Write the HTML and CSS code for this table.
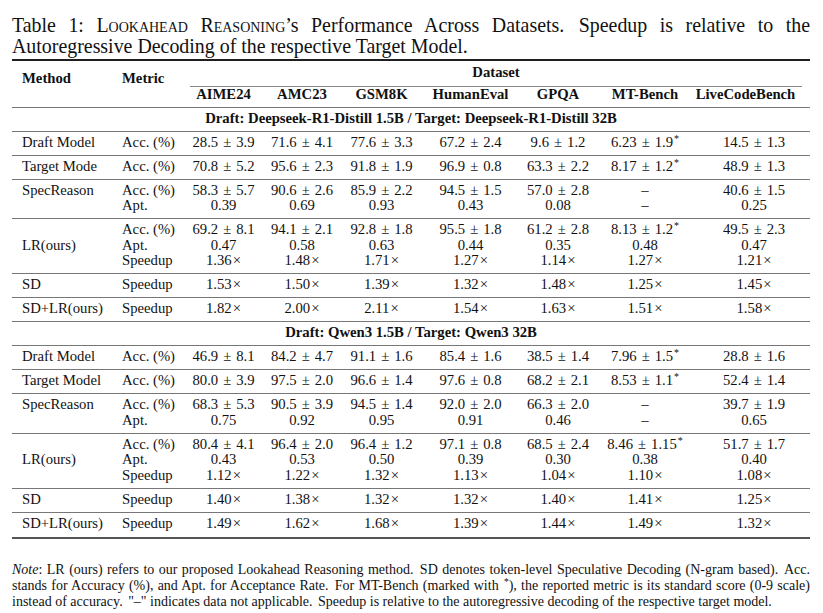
FILE: index.html
```html
<!DOCTYPE html>
<html lang="en">
<head>
<meta charset="utf-8">
<title>Table 1</title>
<link rel="stylesheet" href="styles.css">
</head>
<body>
<div class="page">
  <div class="caption">
    <div class="jline">Table 1: <span class="sc">Lookahead Reasoning</span>’s Performance Across Datasets.<span class="ss"></span> Speedup is relative to the</div>
    <div class="line">Autoregressive Decoding of the respective Target Model.</div>
  </div>

  <table class="results">
    <colgroup>
      <col class="c-method"><col class="c-metric"><col class="c-aime"><col class="c-amc"><col class="c-gsm"><col class="c-he"><col class="c-gpqa"><col class="c-mt"><col class="c-lcb">
    </colgroup>
    <thead>
      <tr class="h1">
        <th class="hm" rowspan="2">Method</th>
        <th class="hm" rowspan="2">Metric</th>
        <th class="dataset" colspan="7"><div class="dataset-label">Dataset</div></th>
      </tr>
      <tr class="h2">
        <th>AIME24</th><th>AMC23</th><th>GSM8K</th><th>HumanEval</th><th>GPQA</th><th>MT-Bench</th><th class="lcb">LiveCodeBench</th>
      </tr>
    </thead>
    <tbody>
      <tr class="sec"><th colspan="9">Draft: Deepseek-R1-Distill 1.5B / Target: Deepseek-R1-Distill 32B</th></tr>
      <tr>
        <td class="m">Draft Model</td><td class="k">Acc. (%)</td>
        <td>28.5<span class="pm">±</span>3.9</td><td>71.6<span class="pm">±</span>4.1</td><td>77.6<span class="pm">±</span>3.3</td><td>67.2<span class="pm">±</span>2.4</td><td>9.6<span class="pm">±</span>1.2</td><td>6.23<span class="pm">±</span>1.9<sup class="ast">*</sup></td><td class="l">14.5<span class="pm">±</span>1.3</td>
      </tr>
      <tr>
        <td class="m">Target Mode</td><td class="k">Acc. (%)</td>
        <td>70.8<span class="pm">±</span>5.2</td><td>95.6<span class="pm">±</span>2.3</td><td>91.8<span class="pm">±</span>1.9</td><td>96.9<span class="pm">±</span>0.8</td><td>63.3<span class="pm">±</span>2.2</td><td>8.17<span class="pm">±</span>1.2<sup class="ast">*</sup></td><td class="l">48.9<span class="pm">±</span>1.3</td>
      </tr>
      <tr>
        <td class="m">SpecReason</td><td class="k">Acc. (%)<br>Apt.</td>
        <td>58.3<span class="pm">±</span>5.7<br>0.39</td><td>90.6<span class="pm">±</span>2.6<br>0.69</td><td>85.9<span class="pm">±</span>2.2<br>0.93</td><td>94.5<span class="pm">±</span>1.5<br>0.43</td><td>57.0<span class="pm">±</span>2.8<br>0.08</td><td>–<br>–</td><td class="l">40.6<span class="pm">±</span>1.5<br>0.25</td>
      </tr>
      <tr>
        <td class="m mid">LR(ours)</td><td class="k">Acc. (%)<br>Apt.<br>Speedup</td>
        <td>69.2<span class="pm">±</span>8.1<br>0.47<br>1.36<span class="x">×</span></td>
        <td>94.1<span class="pm">±</span>2.1<br>0.58<br>1.48<span class="x">×</span></td>
        <td>92.8<span class="pm">±</span>1.8<br>0.63<br>1.71<span class="x">×</span></td>
        <td>95.5<span class="pm">±</span>1.8<br>0.44<br>1.27<span class="x">×</span></td>
        <td>61.2<span class="pm">±</span>2.8<br>0.35<br>1.14<span class="x">×</span></td>
        <td>8.13<span class="pm">±</span>1.2<sup class="ast">*</sup><br>0.48<br>1.27<span class="x">×</span></td>
        <td class="l">49.5<span class="pm">±</span>2.3<br>0.47<br>1.21<span class="x">×</span></td>
      </tr>
      <tr>
        <td class="m">SD</td><td class="k">Speedup</td>
        <td>1.53<span class="x">×</span></td><td>1.50<span class="x">×</span></td><td>1.39<span class="x">×</span></td><td>1.32<span class="x">×</span></td><td>1.48<span class="x">×</span></td><td>1.25<span class="x">×</span></td><td class="l">1.45<span class="x">×</span></td>
      </tr>
      <tr>
        <td class="m">SD+LR(ours)</td><td class="k">Speedup</td>
        <td>1.82<span class="x">×</span></td><td>2.00<span class="x">×</span></td><td>2.11<span class="x">×</span></td><td>1.54<span class="x">×</span></td><td>1.63<span class="x">×</span></td><td>1.51<span class="x">×</span></td><td class="l">1.58<span class="x">×</span></td>
      </tr>

      <tr class="sec"><th colspan="9">Draft: Qwen3 1.5B / Target: Qwen3 32B</th></tr>
      <tr>
        <td class="m">Draft Model</td><td class="k">Acc. (%)</td>
        <td>46.9<span class="pm">±</span>8.1</td><td>84.2<span class="pm">±</span>4.7</td><td>91.1<span class="pm">±</span>1.6</td><td>85.4<span class="pm">±</span>1.6</td><td>38.5<span class="pm">±</span>1.4</td><td>7.96<span class="pm">±</span>1.5<sup class="ast">*</sup></td><td class="l">28.8<span class="pm">±</span>1.6</td>
      </tr>
      <tr>
        <td class="m">Target Model</td><td class="k">Acc. (%)</td>
        <td>80.0<span class="pm">±</span>3.9</td><td>97.5<span class="pm">±</span>2.0</td><td>96.6<span class="pm">±</span>1.4</td><td>97.6<span class="pm">±</span>0.8</td><td>68.2<span class="pm">±</span>2.1</td><td>8.53<span class="pm">±</span>1.1<sup class="ast">*</sup></td><td class="l">52.4<span class="pm">±</span>1.4</td>
      </tr>
      <tr>
        <td class="m">SpecReason</td><td class="k">Acc. (%)<br>Apt.</td>
        <td>68.3<span class="pm">±</span>5.3<br>0.75</td><td>90.5<span class="pm">±</span>3.9<br>0.92</td><td>94.5<span class="pm">±</span>1.4<br>0.95</td><td>92.0<span class="pm">±</span>2.0<br>0.91</td><td>66.3<span class="pm">±</span>2.0<br>0.46</td><td>–<br>–</td><td class="l">39.7<span class="pm">±</span>1.9<br>0.65</td>
      </tr>
      <tr>
        <td class="m mid">LR(ours)</td><td class="k">Acc. (%)<br>Apt.<br>Speedup</td>
        <td>80.4<span class="pm">±</span>4.1<br>0.43<br>1.12<span class="x">×</span></td>
        <td>96.4<span class="pm">±</span>2.0<br>0.53<br>1.22<span class="x">×</span></td>
        <td>96.4<span class="pm">±</span>1.2<br>0.50<br>1.32<span class="x">×</span></td>
        <td>97.1<span class="pm">±</span>0.8<br>0.39<br>1.13<span class="x">×</span></td>
        <td>68.5<span class="pm">±</span>2.4<br>0.30<br>1.04<span class="x">×</span></td>
        <td>8.46<span class="pm">±</span>1.15<sup class="ast">*</sup><br>0.38<br>1.10<span class="x">×</span></td>
        <td class="l">51.7<span class="pm">±</span>1.7<br>0.40<br>1.08<span class="x">×</span></td>
      </tr>
      <tr>
        <td class="m">SD</td><td class="k">Speedup</td>
        <td>1.40<span class="x">×</span></td><td>1.38<span class="x">×</span></td><td>1.32<span class="x">×</span></td><td>1.32<span class="x">×</span></td><td>1.40<span class="x">×</span></td><td>1.41<span class="x">×</span></td><td class="l">1.25<span class="x">×</span></td>
      </tr>
      <tr class="last">
        <td class="m">SD+LR(ours)</td><td class="k">Speedup</td>
        <td>1.49<span class="x">×</span></td><td>1.62<span class="x">×</span></td><td>1.68<span class="x">×</span></td><td>1.39<span class="x">×</span></td><td>1.44<span class="x">×</span></td><td>1.49<span class="x">×</span></td><td class="l">1.32<span class="x">×</span></td>
      </tr>
    </tbody>
  </table>

  <div class="note">
    <div class="jline"><em>Note</em>: LR (ours) refers to our proposed Lookahead Reasoning method.<span class="ss"></span> SD denotes token-level Speculative Decoding (N-gram based).<span class="ss"></span> Acc.</div>
    <div class="jline">stands for Accuracy (%), and Apt. for Acceptance Rate.<span class="ss"></span> For MT-Bench (marked with <sup class="ast">*</sup>), the reported metric is its standard score (0-9 scale)</div>
    <div class="line">instead of accuracy.<span class="ss"></span> "–" indicates data not applicable.<span class="ss"></span> Speedup is relative to the autoregressive decoding of the respective target model.</div>
  </div>
</div>
</body>
</html>
```

FILE: styles.css
```css
* { box-sizing: border-box; }

html, body {
  margin: 0;
  padding: 0;
  background: #ffffff;
}

body {
  font-family: "Liberation Serif", "Times New Roman", serif;
  color: #111111;
}

.page {
  width: 823px;
  padding: 15px 13px 0 12px;
}

/* caption */
.caption {
  font-size: 19.9px;
  line-height: 20.5px;
  margin-bottom: 3px;
}

.jline {
  text-align: justify;
  text-align-last: justify;
}

.line {
  white-space: nowrap;
}

.sc {
  font-variant: small-caps;
}

.ss {
  margin-right: 2px;
}

/* table */
.results {
  width: 798px;
  table-layout: fixed;
  border-collapse: separate;
  border-spacing: 0;
  font-size: 14.7px;
  line-height: 15.5px;
  border-top: 2px solid #1e1e1e;
}

.c-method { width: 100px; }
.c-metric { width: 73px; }
.c-aime { width: 77px; }
.c-amc { width: 80px; }
.c-gsm { width: 79px; }
.c-he { width: 99px; }
.c-gpqa { width: 76px; }
.c-mt { width: 98px; }
.c-lcb { width: 116px; }

.results th {
  font-weight: bold;
  text-align: center;
  padding: 0;
}

.results th.hm {
  text-align: left;
  vertical-align: top;
  padding: 9.6px 0 0 10px;
  border-bottom: 1px solid #777;
}

.results th.dataset {
  padding: 0;
}

.dataset-label {
  padding: 4.3px 0 5.2px;
  margin: 0 8px 0 5px;
  border-bottom: 1px solid #888;
}

.h2 th {
  padding: 0.3px 0 4.2px;
  border-bottom: 1px solid #777;
  white-space: nowrap;
}

.h2 th.lcb {
  padding-right: 13px;
}

.sec th {
  padding: 2.75px 0 4.75px;
  border-bottom: 1px solid #777;
}

.results td {
  text-align: center;
  vertical-align: top;
  padding: 2.75px 0 4.75px;
  border-bottom: 1px solid #777;
  white-space: nowrap;
}

.results td.m,
.results td.k {
  text-align: left;
  padding-left: 10px;
}

.results td.l {
  padding-left: 4px;
}

.results td.mid {
  vertical-align: middle;
}

.results tr.last td {
  padding-bottom: 5.5px;
  border-bottom: 2px solid #555;
}

.pm {
  margin: 0 5px;
}

.x {
  margin-left: 1px;
}

.ast {
  font-size: 0.68em;
  line-height: 0;
  vertical-align: 0.5em;
  margin-left: 1px;
}

/* note */
.note {
  margin-top: 23.5px;
  font-size: 14px;
  line-height: 16px;
}
```
